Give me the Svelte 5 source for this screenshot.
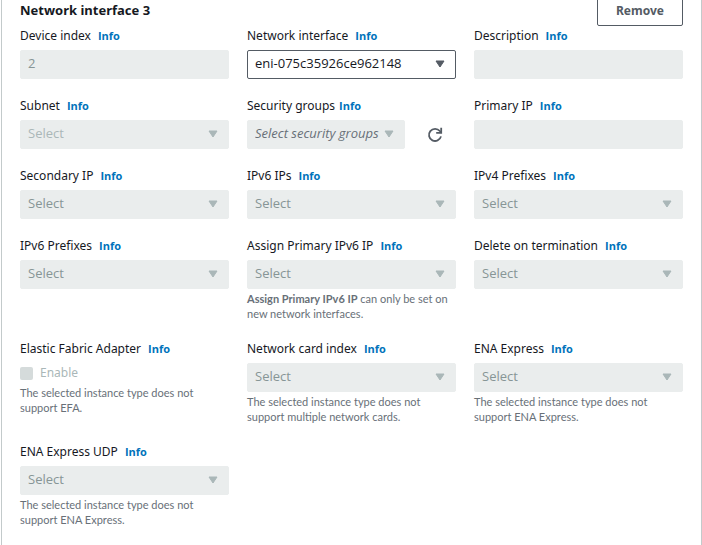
<script>
  const noEna = 'The selected instance type does not support ENA Express.';

  const fields = [
    { id: 'device-index', label: 'Device index', kind: 'text', value: '2' },
    { id: 'network-interface', label: 'Network interface', kind: 'select', value: 'eni-075c35926ce962148', enabled: true },
    { id: 'description', label: 'Description', kind: 'text', value: '' },
    { id: 'subnet', label: 'Subnet', kind: 'select', value: 'Select', faint: true },
    { id: 'security-groups', label: 'Security groups', kind: 'groups', value: 'Select security groups', tight: true },
    { id: 'primary-ip', label: 'Primary IP', kind: 'text', value: '' },
    { id: 'secondary-ip', label: 'Secondary IP', kind: 'select', value: 'Select' },
    { id: 'ipv6-ips', label: 'IPv6 IPs', kind: 'select', value: 'Select' },
    { id: 'ipv4-prefixes', label: 'IPv4 Prefixes', kind: 'select', value: 'Select' },
    { id: 'ipv6-prefixes', label: 'IPv6 Prefixes', kind: 'select', value: 'Select' },
    { id: 'primary-ipv6', label: 'Assign Primary IPv6 IP', kind: 'select', value: 'Select', strong: 'Assign Primary IPv6 IP', help: ' can only be set on new network interfaces.' },
    { id: 'delete-on-termination', label: 'Delete on termination', kind: 'select', value: 'Select' },
    { id: 'efa', label: 'Elastic Fabric Adapter', kind: 'check', value: 'Enable', help: 'The selected instance type does not support EFA.' },
    { id: 'card-index', label: 'Network card index', kind: 'select', value: 'Select', help: 'The selected instance type does not support multiple network cards.' },
    { id: 'ena-express', label: 'ENA Express', kind: 'select', value: 'Select', help: noEna },
    { id: 'ena-express-udp', label: 'ENA Express UDP', kind: 'select', value: 'Select', help: noEna }
  ];
</script>

{#snippet dropdown(field)}
  <div class="dropdown">
    <select id={field.id} class="control" class:enabled={field.enabled} class:faint={field.faint} class:italic={field.kind === 'groups'} disabled={!field.enabled}>
      <option>{field.value}</option>
    </select>
    <svg class="arrow" class:dark={field.enabled} viewBox="0 0 10 8" aria-hidden="true">
      <path d="M1 1h8L5 7z" fill="currentColor" stroke="currentColor" stroke-linejoin="round" />
    </svg>
  </div>
{/snippet}

<section class="panel">
  <header>
    <h2>Network interface 3</h2>
    <button class="remove" type="button">Remove</button>
  </header>

  <div class="grid">
    {#each fields as field (field.id)}
      <div class="field">
        <div class="caption" class:tight={field.tight}>
          <label for={field.id}>{field.label}</label>
          <a href="#info">Info</a>
        </div>

        {#if field.kind === 'text'}
          <input id={field.id} class="control" type="text" value={field.value} disabled />
        {:else if field.kind === 'select'}
          {@render dropdown(field)}
        {:else if field.kind === 'groups'}
          <div class="with-refresh">
            {@render dropdown(field)}
            <button class="refresh" type="button" aria-label="Refresh security groups">
              <svg viewBox="0 0 16 16" aria-hidden="true">
                <path d="M14 9.4A6.1 6.1 0 1 1 12.8 4L14.2 5.6" />
                <path d="M14.2 .8v5H9.2" />
              </svg>
            </button>
          </div>
        {:else}
          <label class="check">
            <input id={field.id} type="checkbox" disabled />
            <span>{field.value}</span>
          </label>
        {/if}

        {#if field.help}
          <p class="help">{#if field.strong}<strong>{field.strong}</strong>{/if}{field.help}</p>
        {/if}
      </div>
    {/each}
  </div>
</section>

<style>
  :global(body) {
    margin: 0;
    background: #fff;
    overflow: hidden;
  }

  .panel {
    box-sizing: border-box;
    min-height: 100vh;
    margin-left: 1px;
    padding: 0 18px;
    border: solid #c3cacb;
    border-width: 0 1px;
    font-family: 'Noto Sans', 'Open Sans', sans-serif;
    font-size: 12px;
    line-height: 18px;
    color: #16191f;
  }

  header {
    display: flex;
    justify-content: space-between;
    height: 26px;
  }

  h2 {
    margin: 1px 0 0;
    font-size: 13px;
    line-height: 18px;
    font-weight: 700;
  }

  .remove {
    box-sizing: border-box;
    height: 30px;
    margin-top: -4px;
    padding: 0 18px;
    border: 1px solid #545b64;
    border-radius: 2px;
    background: #fff;
    color: #545b64;
    font: 700 12px/18px 'Noto Sans', 'Open Sans', sans-serif;
  }

  .grid {
    display: grid;
    grid-template-columns: repeat(3, minmax(0, 1fr));
    gap: 18px;
  }

  .caption {
    display: flex;
    align-items: baseline;
    gap: 7px;
    height: 18px;
    margin-bottom: 5px;
    padding-top: 1px;
    white-space: nowrap;
  }

  .field {
    margin-bottom: -1px;
  }

  .caption.tight {
    gap: 4px;
  }

  a {
    color: #0073bb;
    font-family: 'Open Sans', sans-serif;
    font-size: 11px;
    font-weight: 700;
    text-decoration: none;
  }

  .control {
    box-sizing: border-box;
    display: block;
    width: 100%;
    height: 29px;
    margin: 0;
    padding: 0 7px 3px;
    border: 1px solid #eaeded;
    border-radius: 2px;
    background: #eaeded;
    color: #879596;
    font: 13px/18px 'Open Sans', sans-serif;
    opacity: 1;
    appearance: none;
  }

  .control.enabled {
    border-color: #545b64;
    background: #fff;
    color: #16191f;
  }

  .control.faint {
    color: #aab7b8;
  }

  .control.italic {
    color: #687078;
    font-style: italic;
  }

  .dropdown {
    position: relative;
    flex: 1;
  }

  .arrow {
    position: absolute;
    top: 10px;
    right: 11px;
    width: 10px;
    height: 8px;
    color: #aab7b8;
    pointer-events: none;
  }

  .arrow.dark {
    color: #545b64;
  }

  .with-refresh {
    display: flex;
    gap: 9px;
  }

  .refresh {
    display: grid;
    place-items: center;
    width: 42px;
    height: 29px;
    padding: 0;
    border: 0;
    background: none;
    color: #545b64;
  }

  .refresh svg {
    width: 16px;
    height: 16px;
    fill: none;
    stroke: currentColor;
    stroke-width: 1.8;
  }

  .check {
    display: flex;
    align-items: center;
    gap: 7px;
    height: 20px;
    color: #aab7b8;
  }

  .check input {
    width: 13px;
    height: 13px;
    margin: 0;
    border-radius: 2px;
    background: #d5dbdb;
    appearance: none;
  }

  .help {
    margin: 2px 0 1px;
    color: #687078;
    font-family: Lato, 'Open Sans', sans-serif;
    font-size: 11px;
    line-height: 15px;
  }
</style>
